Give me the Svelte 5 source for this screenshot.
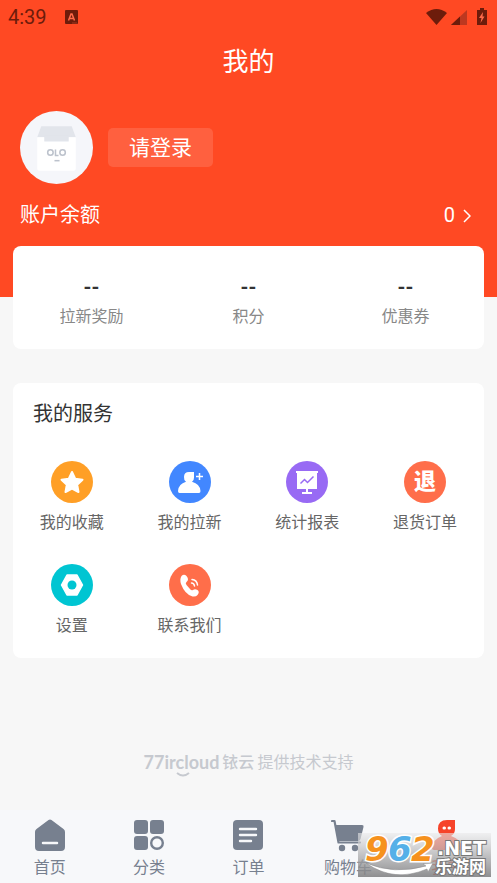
<script lang="ts">
  const stats = ['拉新奖励', '积分', '优惠券'];

  const services = [
    { icon: 'star', label: '我的收藏', color: '#ff9f26' },
    { icon: 'invite', label: '我的拉新', color: '#4287ff' },
    { icon: 'report', label: '统计报表', color: '#986af4' },
    { icon: 'refund', label: '退货订单', color: '#ff6e4a' },
    { icon: 'settings', label: '设置', color: '#00c5d2' },
    { icon: 'contact', label: '联系我们', color: '#ff6e4a' },
  ];

  const tabs = [
    { icon: 'home', label: '首页' },
    { icon: 'category', label: '分类' },
    { icon: 'order', label: '订单' },
    { icon: 'cart', label: '购物车' },
    { icon: 'mine', label: '我的' },
  ];

  let current = $state('mine');
</script>

<div class="page">
  <header>
    <div class="status">
      <span class="time">4:39</span>
      <svg class="app-badge" width="13" height="14" viewBox="0 0 13 14">
        <rect width="13" height="14" rx="1" fill="#6d1c0b" />
        <path d="M3.5 10.5 6 4h1l2.5 6.5M4.5 8.5h4" fill="none" stroke="#ff6a4a" stroke-width="1.5" />
        <path d="M7 13h5" stroke="#a83820" />
      </svg>
      <svg class="signals" width="64" height="20" viewBox="0 0 64 20">
        <path d="M1 6Q11.500-2 22 6L11.500 18Z" fill="#6d1c0b" />
        <path d="M26 18 42 3v15Z" fill="#bd3820" />
        <path d="M26 18 35 9.500V18Z" fill="#6d1c0b" />
        <path d="M55 1h4v2h3v15H52V3h3Z" fill="#6d1c0b" />
        <path d="m58 5-4 6h2.500l-1 5 4-6.500H57.500Z" fill="#ff6a4a" />
      </svg>
    </div>

    <h1>我的</h1>

    <div class="profile">
      <svg class="avatar" viewBox="0 0 72 72">
        <circle cx="36" cy="36" r="36" fill="#f5f6fa" />
        <path d="M21 15h30l4 11H17Z" fill="#e2e5eb" />
        <path d="M17 26h7v4h24v-4h7v31q0 2-2 2H19q-2 0-2-2Z" fill="#fff" />
        <path d="M24 24h24v6H24Z" fill="#e2e5eb" />
        <g fill="none" stroke="#bcc2cc" stroke-width="1.500">
          <circle cx="30" cy="41" r="2.700" />
          <path d="M35 38v6h3" />
          <circle cx="42" cy="41" r="2.700" />
          <path d="M34 49h5" />
        </g>
      </svg>
      <button class="login" type="button">请登录</button>
    </div>

    <a class="balance" href="#balance">
      <span>账户余额</span>
      <span class="amount">
        0
        <svg width="8" height="14" viewBox="0 0 8 14">
          <path d="m1 1 6 6-6 6" fill="none" stroke="#fff" stroke-width="1.500" />
        </svg>
      </span>
    </a>
  </header>

  <main>
    <section class="card stats">
      {#each stats as label}
        <a class="stat" href="#stats">
          <strong>--</strong>
          <span>{label}</span>
        </a>
      {/each}
    </section>

    <section class="card services">
      <h2>我的服务</h2>
      <div class="grid">
        {#each services as item}
          <a class="service" href={'#' + item.icon}>
            <span class="round" style="background: {item.color}">
              {#if item.icon === 'refund'}
                <b>退</b>
              {:else}
                <svg width="42" height="42" viewBox="0 0 42 42" fill="#fff">
                  {#if item.icon === 'star'}
                    <path
                      d="m21 11 3.200 6.700 7.300 1-5.300 5.100 1.300 7.200L21 27.600 14.500 31l1.300-7.200-5.300-5.100 7.300-1Z"
                      stroke="#fff"
                      stroke-width="2"
                      stroke-linejoin="round"
                    />
                  {:else if item.icon === 'invite'}
                    <path d="M15 16q0-5 5-5h5v5.500a5 5 0 0 1-2 4.300q8 2.200 8.500 9.200 0 2-1.500 2H10.500Q9 32 9 30q.5-7 8-9.200a5.500 5.500 0 0 1-2-4.800Z" />
                    <path d="M30.500 12v7M27 15.500h7" stroke="#fff" stroke-width="1.500" />
                  {:else if item.icon === 'report'}
                    <path d="M10 10h22v2h-1v16H11V12h-1ZM20 28h2v4h-2ZM16 31h10v2H16Z" />
                    <path d="m14.500 22.500 4-4 3 3 6-6" fill="none" stroke="#986af4" stroke-width="1.500" />
                  {:else if item.icon === 'settings'}
                    <path
                      d="M16 11h10l5.500 10L26 31H16l-5.500-10Z"
                      stroke="#fff"
                      stroke-width="1.500"
                      stroke-linejoin="round"
                    />
                    <circle cx="21" cy="21" r="4.500" fill="#00c5d2" />
                  {:else}
                    <path d="M12.500 12q2.500-2.500 5 0 3 3.500 0 6-1.500 1 0 3l3.500 4q1.500 2 3 1 2-1.500 4.500 0 2.500 2 0 5-1.500 2-5 1.500Q16 30.500 12 20q-1.500-5 .5-8Z" />
                    <path
                      d="M22.500 19q2.500 0 3 3M23 15.500q5 .5 5.500 5.500"
                      fill="none"
                      stroke="#fff"
                      stroke-width="1.500"
                      stroke-linecap="round"
                    />
                  {/if}
                </svg>
              {/if}
            </span>
            <span>{item.label}</span>
          </a>
        {/each}
      </div>
    </section>

    <footer>
      <span class="brand">
        <span class="latin">77ircloud</span>
        <svg class="smile" width="14" height="5" viewBox="0 0 14 5">
          <path d="M1 1q6 5 12 0" fill="none" stroke="#c6c9cf" stroke-width="2" />
        </svg>
      </span>
      <span class="name">铱云</span>
      <span>提供技术支持</span>
    </footer>
  </main>

  <nav>
    {#each tabs as tab}
      <button
        class="tab"
        class:active={current === tab.icon}
        type="button"
        onclick={() => (current = tab.icon)}
      >
        <svg width="34" height="34" viewBox="0 0 34 34" fill="currentColor">
          {#if tab.icon === 'home'}
            <path d="M15.500 2q1.500-1.200 3 0L30.500 11q1.500 1 1.500 3v15q0 4-4 4H6q-4 0-4-4V14q0-2 1.500-3Z" />
            <path d="M10 25h14" stroke="#f7f8fa" stroke-width="2.500" stroke-linecap="round" />
          {:else if tab.icon === 'category'}
            <rect x="2" y="2" width="14" height="14" rx="3" />
            <rect x="18" y="2" width="14" height="14" rx="3" />
            <rect x="2" y="18" width="14" height="14" rx="3" />
            <circle cx="25" cy="25" r="5.800" fill="none" stroke="currentColor" stroke-width="2.400" />
          {:else if tab.icon === 'order'}
            <rect x="2" y="2" width="30" height="30" rx="4" />
            <path
              d="M9 11h16M9 17h16M9 23h11"
              stroke="#f7f8fa"
              stroke-width="2.400"
              stroke-linecap="round"
            />
          {:else if tab.icon === 'cart'}
            <path
              d="M1 3h2.500l4 21.500H29"
              fill="none"
              stroke="currentColor"
              stroke-width="2.200"
              stroke-linejoin="round"
              stroke-linecap="round"
            />
            <path d="M4 7h27q2 0 1.500 2l-3 12q-.5 2-2.500 2H7Z" />
            <circle cx="11" cy="30" r="3.200" />
            <circle cx="24" cy="30" r="3.200" />
          {:else}
            <path d="M8 10.500Q8 2 17 2h8v9q0 5-4 7 10 3 11 12 0 2-2 2H4q-2 0-2-2 1-9 10-12-4-2-4-7.500Z" />
            <path d="M14 10h.5M19 10h.5" stroke="#fff" stroke-width="3" stroke-linecap="round" />
          {/if}
        </svg>
        <span>{tab.label}</span>
      </button>
    {/each}

    <div class="watermark">
      <svg width="133" height="44" viewBox="0 0 133 44">
        <defs>
          <linearGradient id="shade" x2="0" y2="1">
            <stop offset="0" stop-color="#e9e9ea" stop-opacity=".6" />
            <stop offset=".5" stop-color="#b0b0b1" stop-opacity=".75" />
            <stop offset="1" stop-color="#7c7c7e" stop-opacity=".85" />
          </linearGradient>
        </defs>
        <rect width="133" height="44" fill="url(#shade)" />
        <path d="M8 30q28 12 60 3l-3-2 10-1-5 9-1-3Q36 50 8 30Z" fill="#fff" stroke="#8b8b8d" stroke-width=".5" />
        <g class="digits">
          <text x="7" y="28" fill="#f6921e">9</text>
          <text x="30" y="28" fill="#55b0e8">6</text>
          <text x="53" y="28" fill="#f6921e">2</text>
        </g>
        <text class="net" x="79" y="22">.NET</text>
        <text class="site" x="77" y="40">乐游网</text>
      </svg>
    </div>
  </nav>
</div>

<style>
  :global(body) {
    margin: 0;
    background: #f7f7f7;
  }

  .page {
    display: flex;
    flex-direction: column;
    min-height: 100vh;
    font-family: Roboto, "Noto Sans CJK SC", sans-serif;
    color: #333;
  }

  a {
    color: inherit;
    text-decoration: none;
  }

  button {
    border: none;
    font-family: inherit;
    cursor: pointer;
  }

  svg {
    display: block;
    flex: none;
  }

  header {
    background: #ff4923;
    color: #fff;
    padding-bottom: 62px;
  }

  .status {
    display: flex;
    align-items: center;
    height: 34px;
    padding: 0 8px;
    color: #6d1c0b;
    font-size: 20px;
  }

  .app-badge {
    margin-left: 18px;
  }

  .signals {
    margin-left: auto;
  }

  h1 {
    margin: 0;
    font-size: 26px;
    font-weight: 400;
    line-height: 56px;
    text-align: center;
  }

  .profile {
    display: flex;
    align-items: center;
    gap: 15px;
    padding: 21px 20px 12px;
  }

  .avatar {
    width: 73px;
    height: 73px;
  }

  .login {
    height: 39px;
    padding: 0 21px;
    border-radius: 5px;
    background: rgba(255, 255, 255, 0.13);
    color: #fff;
    font-size: 21px;
    line-height: 36px;
  }

  .balance {
    display: flex;
    align-items: center;
    justify-content: space-between;
    padding: 0 26px 0 20px;
    font-size: 20px;
    line-height: 39px;
  }

  .amount {
    display: flex;
    align-items: center;
    gap: 8px;
  }

  main {
    display: flex;
    flex: 1;
    flex-direction: column;
    padding: 0 13px;
  }

  .card {
    border-radius: 8px;
    background: #fff;
  }

  .stats {
    display: grid;
    grid-template-columns: repeat(3, 1fr);
    margin-top: -51px;
    padding: 27px 0 18px;
  }

  .stat {
    display: flex;
    flex-direction: column;
    align-items: center;
    gap: 2px;
    color: #888;
    font-size: 16px;
    line-height: 28px;
  }

  .stat strong {
    color: #333;
    font-size: 20px;
  }

  .services {
    margin-top: 34px;
    padding: 15px 0 20px;
  }

  h2 {
    margin: 0 20px;
    font-size: 20px;
    font-weight: 400;
    line-height: 32px;
  }

  .grid {
    display: grid;
    grid-template-columns: repeat(4, 1fr);
    gap: 29px 0;
    padding-top: 31px;
  }

  .service {
    display: flex;
    flex-direction: column;
    align-items: center;
    gap: 8px;
    color: #666;
    font-size: 16px;
    line-height: 24px;
  }

  .round {
    display: grid;
    place-items: center;
    width: 42px;
    height: 42px;
    border-radius: 50%;
    color: #fff;
    font-size: 22px;
  }

  .round b {
    font-weight: 900;
  }

  footer {
    display: flex;
    align-items: center;
    justify-content: center;
    gap: 3px;
    margin: auto 0 32px;
    color: #c6c9cf;
    font-size: 16px;
    line-height: 28px;
  }

  .brand {
    position: relative;
  }

  .latin {
    font-family: Lato, sans-serif;
    font-size: 18px;
    font-weight: 700;
  }

  .smile {
    position: absolute;
    left: 32px;
    bottom: 1px;
  }

  .name {
    font-weight: 500;
  }

  nav {
    position: relative;
    display: grid;
    grid-template-columns: repeat(5, 1fr);
    background: #f7f8fa;
  }

  .tab {
    display: flex;
    flex-direction: column;
    align-items: center;
    gap: 4px;
    padding: 8px 0 3px;
    background: none;
    color: #77808f;
    font-size: 16px;
    line-height: 24px;
    white-space: nowrap;
  }

  .active {
    color: #f6432a;
  }

  .watermark {
    position: absolute;
    right: 6px;
    bottom: 6px;
    pointer-events: none;
  }

  .watermark svg {
    overflow: visible;
  }

  .digits {
    font: italic 700 34px "DejaVu Sans", sans-serif;
    stroke: #fff;
    stroke-width: 3px;
    paint-order: stroke;
  }

  .net,
  .site {
    fill: #fff;
    stroke: #777;
    stroke-width: 2px;
    paint-order: stroke;
  }

  .net {
    font: 700 19px "DejaVu Sans", sans-serif;
  }

  .site {
    font: 700 17px "Noto Sans CJK SC", sans-serif;
  }
</style>
